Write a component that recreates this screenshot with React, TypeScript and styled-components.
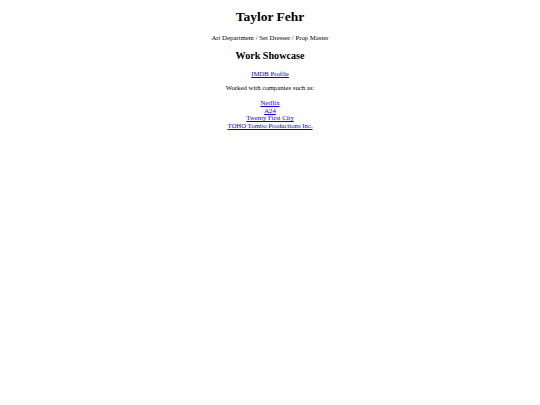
import styled, { createGlobalStyle } from 'styled-components'

// the page is a plain document, scaled to fit a 540px window
const GlobalStyle = createGlobalStyle`
  body {
    margin: 0 3.375px 3.375px;
    font-family: "Liberation Serif", "Times New Roman", serif;
    font-size: 6.75px;
    line-height: 7.7px;
    color: #000;
    background: #fff;
  }
`

const Page = styled.main`
  text-align: center;
`

const Name = styled.h1`
  font-size: 13.5px;
  line-height: 15.5px;
  font-weight: bold;
  margin: 0 0 9.05px;
  padding-top: 9.4px;
`

const Text = styled.p`
  margin: 6.75px 0;
`

const Heading = styled.h2`
  font-size: 10.125px;
  line-height: 11.6px;
  font-weight: bold;
  margin: 8.4px 0;
`

const CompanyList = styled.p`
  margin: 5.4px 0;
`

const Link = styled.a`
  color: #0000ee;
  text-decoration: underline;
`

const companies = [
  'Netflix',
  'A24',
  'Twenty First City',
  'TOHO Tombo Productions Inc.'
]

export default function App() {
  return (
    <>
      <GlobalStyle />
      <Page>
        <Name>Taylor Fehr</Name>
        <Text>Art Department / Set Dresser / Prop Master</Text>
        <Heading>Work Showcase</Heading>
        <Text>
          <Link href="#">IMDB Profile</Link>
        </Text>
        <Text>Worked with companies such as:</Text>
        <CompanyList>
          {companies.map((c, i) => (
            <span key={c}>
              <Link href="#">{c}</Link>
              {i < companies.length - 1 && <br />}
            </span>
          ))}
        </CompanyList>
      </Page>
    </>
  )
}
